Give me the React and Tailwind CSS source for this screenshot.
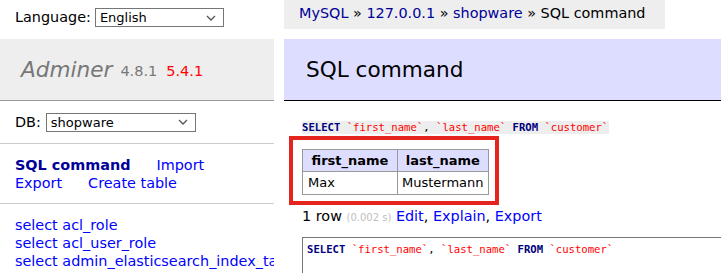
function Chevron() {
  return (
    <svg width="10" height="6" viewBox="0 0 10 6" className="shrink-0">
      <polyline points="1,1 5,5 9,1" fill="none" stroke="#555" strokeWidth="1.3" />
    </svg>
  );
}

function FakeSelect({ value, width }) {
  return (
    <div
      className={`flex h-[19px] items-center justify-between border border-[#767676] bg-white pl-[4px] pr-[7px] text-[13px] leading-none text-black ${width}`}
    >
      <span>{value}</span>
      <Chevron />
    </div>
  );
}

function SqlCode() {
  return (
    <>
      <span className="font-bold text-[#000080]">SELECT</span>{" "}
      <span className="text-[#f00]">`first_name`</span>,{" "}
      <span className="text-[#f00]">`last_name`</span>{" "}
      <span className="font-bold text-[#000080]">FROM</span>{" "}
      <span className="text-[#f00]">`customer`</span>
    </>
  );
}

const tables = ["acl_role", "acl_user_role", "admin_elasticsearch_index_task"];

export default function App() {
  return (
    <div className="flex h-[273px] w-[721px] overflow-hidden bg-white font-['DejaVu_Sans',Verdana,sans-serif] text-[14.4px] leading-[18px] text-black">
      {/* Menu */}
      <div className="w-[274px] shrink-0 overflow-hidden">
        <div className="flex h-[39px] items-start gap-[4px] px-[15px] pt-[8px]">
          <span className="leading-[19px]">Language:</span>
          <FakeSelect value="English" width="w-[129px]" />
        </div>

        <div className="flex h-[62px] items-center border-b border-[#999] bg-[#eee] px-[21px]">
          <span className="text-[21.6px] italic leading-[27px] text-[#777]">Adminer</span>
          <span className="ml-[8px] mt-[3px] text-[14.5px] text-[#777]">4.8.1</span>
          <span className="ml-[9px] mt-[3px] text-[14.5px] text-[#f00]">5.4.1</span>
        </div>

        <div className="flex h-[43px] items-center gap-[5px] border-b border-[#ccc] px-[15px]">
          <span>DB:</span>
          <FakeSelect value="shopware" width="w-[150px]" />
        </div>

        <div className="border-b border-[#ccc] px-[15px] pb-[11px] pt-[12px]">
          <div className="whitespace-nowrap">
            <span className="mr-[26px] font-bold text-[#000099]">SQL command</span>
            <span className="text-[#00f]">Import</span>
          </div>
          <div className="whitespace-nowrap">
            <span className="mr-[26px] text-[#00f]">Export</span>
            <span className="text-[#00f]">Create table</span>
          </div>
        </div>

        <ul className="px-[15px] pt-[12px]">
          {tables.map((t) => (
            <li key={t} className="whitespace-nowrap text-[#00f]">
              select {t}
            </li>
          ))}
        </ul>
      </div>

      {/* Content */}
      <div className="ml-[10px] min-w-0 flex-1">
        <div className="h-[29px] w-fit whitespace-nowrap bg-[#eee] pl-[15px] pr-[20px] leading-[26px]">
          <span className="text-[#000099]">MySQL</span> »{" "}
          <span className="text-[#000099]">127.0.0.1</span> »{" "}
          <span className="text-[#000099]">shopware</span> » SQL command
        </div>

        <h2 className="mt-[10px] flex h-[62px] items-center border-b border-black bg-[#ddf] px-[22px] text-[21.6px] font-normal leading-[27px]">
          SQL command
        </h2>

        <div className="pl-[18px]">
          <div className="mt-[20px] h-[13px] w-fit whitespace-nowrap bg-[#eee] pr-[1px] font-['DejaVu_Sans_Mono',monospace] text-[10.6px] leading-[13px]">
            <SqlCode />
          </div>

          <div className="-ml-[13px] mt-[2px] w-fit border-4 border-[#e5231f] pb-[6px] pl-[9px] pr-[6px] pt-[9px]">
            <table className="border-collapse text-[13px] leading-[16px]">
              <thead>
                <tr className="bg-[#ddf]">
                  <th className="h-[22px] w-[95px] border border-[#999] px-[6px] text-center font-bold">first_name</th>
                  <th className="h-[22px] w-[90px] border border-[#999] px-[6px] text-center font-bold">last_name</th>
                </tr>
              </thead>
              <tbody>
                <tr>
                  <td className="h-[23px] border border-[#999] px-[5px]">Max</td>
                  <td className="h-[23px] border border-[#999] px-[4px]">Mustermann</td>
                </tr>
              </tbody>
            </table>
          </div>

          <p className="mt-[2px] h-[18px] whitespace-nowrap">
            1 row <span className="text-[10px] text-[#c0c0c0]">(0.002 s)</span>{" "}
            <span className="text-[#00f]">Edit</span>, <span className="text-[#00f]">Explain</span>,{" "}
            <span className="text-[#00f]">Export</span>
          </p>

          <div className="mt-[12px] h-[60px] w-[600px] whitespace-nowrap border border-[#767676] px-[4px] pt-[5px] font-['DejaVu_Sans_Mono',monospace] text-[10.6px] leading-[13px]">
            <SqlCode />
          </div>
        </div>
      </div>
    </div>
  );
}
